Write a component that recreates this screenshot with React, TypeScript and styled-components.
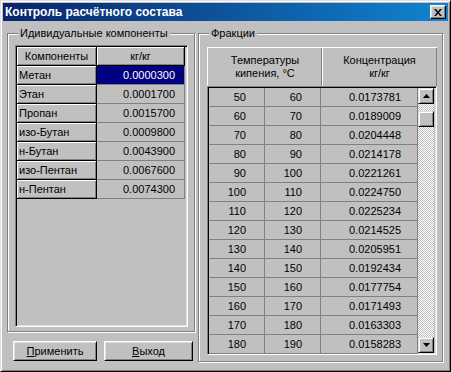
import React from "react";
import styled, { createGlobalStyle } from "styled-components";

const GlobalStyle = createGlobalStyle`
  html, body {
    margin: 0;
    padding: 0;
    background: #c0c0c0;
  }
  body {
    font-family: "Liberation Sans", Arial, sans-serif;
    font-size: 11px;
    color: #000;
  }
`;

const Window = styled.div`
  width: 451px;
  height: 372px;
  box-sizing: border-box;
  background: #c0c0c0;
  border: 1px solid;
  border-color: #dfdfdf #000 #000 #dfdfdf;
  box-shadow: inset 1px 1px #fff, inset -1px -1px #808080;
  padding: 2px;
  display: flex;
  flex-direction: column;
`;

const TitleBar = styled.div`
  height: 18px;
  display: flex;
  align-items: center;
  justify-content: space-between;
  padding: 0 2px 0 2px;
  background: linear-gradient(to right, #0a246a, #1084d0);
  color: #fff;
  font-weight: bold;
  font-size: 12px;
`;

const CloseButton = styled.div`
  width: 16px;
  height: 14px;
  box-sizing: border-box;
  background: #c0c0c0;
  border: 1px solid;
  border-color: #fff #000 #000 #fff;
  box-shadow: inset -1px -1px #808080, inset 1px 1px #dfdfdf;
  display: flex;
  align-items: center;
  justify-content: center;
`;

const Body = styled.div`
  display: flex;
  gap: 3px;
  padding: 12px 0 0 4px;
`;

const Column = styled.div`
  display: flex;
  flex-direction: column;
`;

const Group = styled.div<{ $w: number; $h: number }>`
  position: relative;
  width: ${(p) => p.$w}px;
  height: ${(p) => p.$h}px;
  box-sizing: border-box;
  border: 1px solid #808080;
  box-shadow: inset 1px 1px #fff, 1px 1px #fff;
  padding: ${(p) => (p.$w > 200 ? "13px 5px 5px 8px" : "11px 6px 4px 7px")};
`;

const GroupLabel = styled.span`
  position: absolute;
  left: 10px;
  top: -8px;
  padding: 0 2px;
  background: #c0c0c0;
  line-height: 14px;
`;

const Sunken = styled.div<{ $h: number }>`
  height: ${(p) => p.$h}px;
  box-sizing: border-box;
  border: 1px solid;
  border-color: #808080 #fff #fff #808080;
  box-shadow: inset 1px 1px #000, inset -1px -1px #dfdfdf;
  padding: 1px;
  overflow: hidden;
`;

const Grid = styled.div<{ $cols: string }>`
  display: grid;
  grid-template-columns: ${(p) => p.$cols};
  grid-auto-rows: 19px;
`;

const FixedCell = styled.div<{ $center?: boolean }>`
  box-sizing: border-box;
  border-right: 1px solid #000;
  border-bottom: 1px solid #000;
  box-shadow: inset 1px 1px #fff, inset -1px -1px #808080;
  display: flex;
  align-items: center;
  justify-content: ${(p) => (p.$center ? "center" : "flex-start")};
  padding-left: ${(p) => (p.$center ? 0 : 2)}px;
  white-space: nowrap;
`;

const Cell = styled.div<{ $pad: number; $selected?: boolean }>`
  box-sizing: border-box;
  border-right: 1px solid #808080;
  border-bottom: 1px solid #808080;
  display: flex;
  align-items: center;
  justify-content: flex-end;
  padding-right: ${(p) => p.$pad}px;
  background: ${(p) => (p.$selected ? "#000080" : "transparent")};
  color: ${(p) => (p.$selected ? "#fff" : "#000")};
  white-space: nowrap;
`;

const Buttons = styled.div`
  display: flex;
  gap: 7px;
  padding: 9px 0 0 6px;
`;

const PushButton = styled.div<{ $w: number }>`
  width: ${(p) => p.$w}px;
  height: 20px;
  box-sizing: border-box;
  border: 1px solid;
  border-color: #fff #000 #000 #fff;
  box-shadow: inset 1px 1px #dfdfdf, inset -1px -1px #808080;
  display: flex;
  align-items: center;
  justify-content: center;
  u {
    text-decoration: underline;
  }
`;

const FracHeader = styled.div`
  height: 39px;
  box-sizing: border-box;
  display: grid;
  grid-template-columns: 114px 1fr;
  border-top: 1px solid #fff;
  border-left: 1px solid #fff;
  box-shadow: inset -1px 0 #808080;
`;

const HeadCell = styled.div`
  display: flex;
  align-items: center;
  justify-content: center;
  text-align: center;
  line-height: 13px;
  & + & {
    box-shadow: inset 1px 0 #fff, -1px 0 #808080;
  }
`;

const DataRow = styled.div`
  display: flex;
  height: 265px;
`;

const ScrollBar = styled.div`
  width: 16px;
  display: flex;
  flex-direction: column;
`;

const ScrollButton = styled.div`
  width: 16px;
  height: 16px;
  box-sizing: border-box;
  background: #c0c0c0;
  border: 1px solid;
  border-color: #dfdfdf #000 #000 #dfdfdf;
  box-shadow: inset 1px 1px #fff, inset -1px -1px #808080;
  display: flex;
  align-items: center;
  justify-content: center;
`;

const Track = styled.div`
  flex: 1;
  background-image: conic-gradient(#fff 25%, #c0c0c0 0 50%, #fff 0 75%, #c0c0c0 0);
  background-size: 2px 2px;
  padding-top: 7px;
`;

const Arrow = ({ down }: { down?: boolean }) => (
  <svg width="7" height="4" viewBox="0 0 7 4">
    <polygon points={down ? "0,0 7,0 3.5,4" : "3.5,0 7,4 0,4"} fill="#000" />
  </svg>
);

const components = [
  ["Метан", "0.0000300"],
  ["Этан", "0.0001700"],
  ["Пропан", "0.0015700"],
  ["изо-Бутан", "0.0009800"],
  ["н-Бутан", "0.0043900"],
  ["изо-Пентан", "0.0067600"],
  ["н-Пентан", "0.0074300"],
];

const fractions = [
  [50, 60, "0.0173781"],
  [60, 70, "0.0189009"],
  [70, 80, "0.0204448"],
  [80, 90, "0.0214178"],
  [90, 100, "0.0221261"],
  [100, 110, "0.0224750"],
  [110, 120, "0.0225234"],
  [120, 130, "0.0214525"],
  [130, 140, "0.0205951"],
  [140, 150, "0.0192434"],
  [150, 160, "0.0177754"],
  [160, 170, "0.0171493"],
  [170, 180, "0.0163303"],
  [180, 190, "0.0158283"],
];

export default function App() {
  return (
    <>
      <GlobalStyle />
      <Window>
        <TitleBar>
          <span>Контроль расчётного состава</span>
          <CloseButton>
            <svg width="8" height="7" viewBox="0 0 8 7">
              <path d="M0 0h2l2 2.5L6 0h2L5 3.5 8 7H6L4 4.5 2 7H0l3-3.5z" fill="#000" />
            </svg>
          </CloseButton>
        </TitleBar>
        <Body>
          <Column>
            <Group $w={188} $h={299}>
              <GroupLabel>Идивидуальные компоненты</GroupLabel>
              <Sunken $h={282}>
                <Grid $cols="80px 88px">
                  <FixedCell $center>Компоненты</FixedCell>
                  <FixedCell $center>кг/кг</FixedCell>
                  {components.map(([name, value], i) => (
                    <React.Fragment key={name}>
                      <FixedCell>{name}</FixedCell>
                      <Cell $pad={9} $selected={i === 0}>{value}</Cell>
                    </React.Fragment>
                  ))}
                </Grid>
              </Sunken>
            </Group>
            <Buttons>
              <PushButton $w={84}>
                <span><u>П</u>рименить</span>
              </PushButton>
              <PushButton $w={89}>
                <span><u>В</u>ыход</span>
              </PushButton>
            </Buttons>
          </Column>
          <Group $w={245} $h={329}>
            <GroupLabel>Фракции</GroupLabel>
            <FracHeader>
              <HeadCell>Температуры<br />кипения, °С</HeadCell>
              <HeadCell>Концентрация<br />кг/кг</HeadCell>
            </FracHeader>
            <Sunken $h={269}>
              <DataRow>
                <Grid $cols="56px 56px 97px">
                  {fractions.map(([from, to, c]) => (
                    <React.Fragment key={String(from)}>
                      <Cell $pad={18}>{from}</Cell>
                      <Cell $pad={18}>{to}</Cell>
                      <Cell $pad={16}>{c}</Cell>
                    </React.Fragment>
                  ))}
                </Grid>
                <ScrollBar>
                  <ScrollButton><Arrow /></ScrollButton>
                  <Track>
                    <ScrollButton />
                  </Track>
                  <ScrollButton><Arrow down /></ScrollButton>
                </ScrollBar>
              </DataRow>
            </Sunken>
          </Group>
        </Body>
      </Window>
    </>
  );
}
